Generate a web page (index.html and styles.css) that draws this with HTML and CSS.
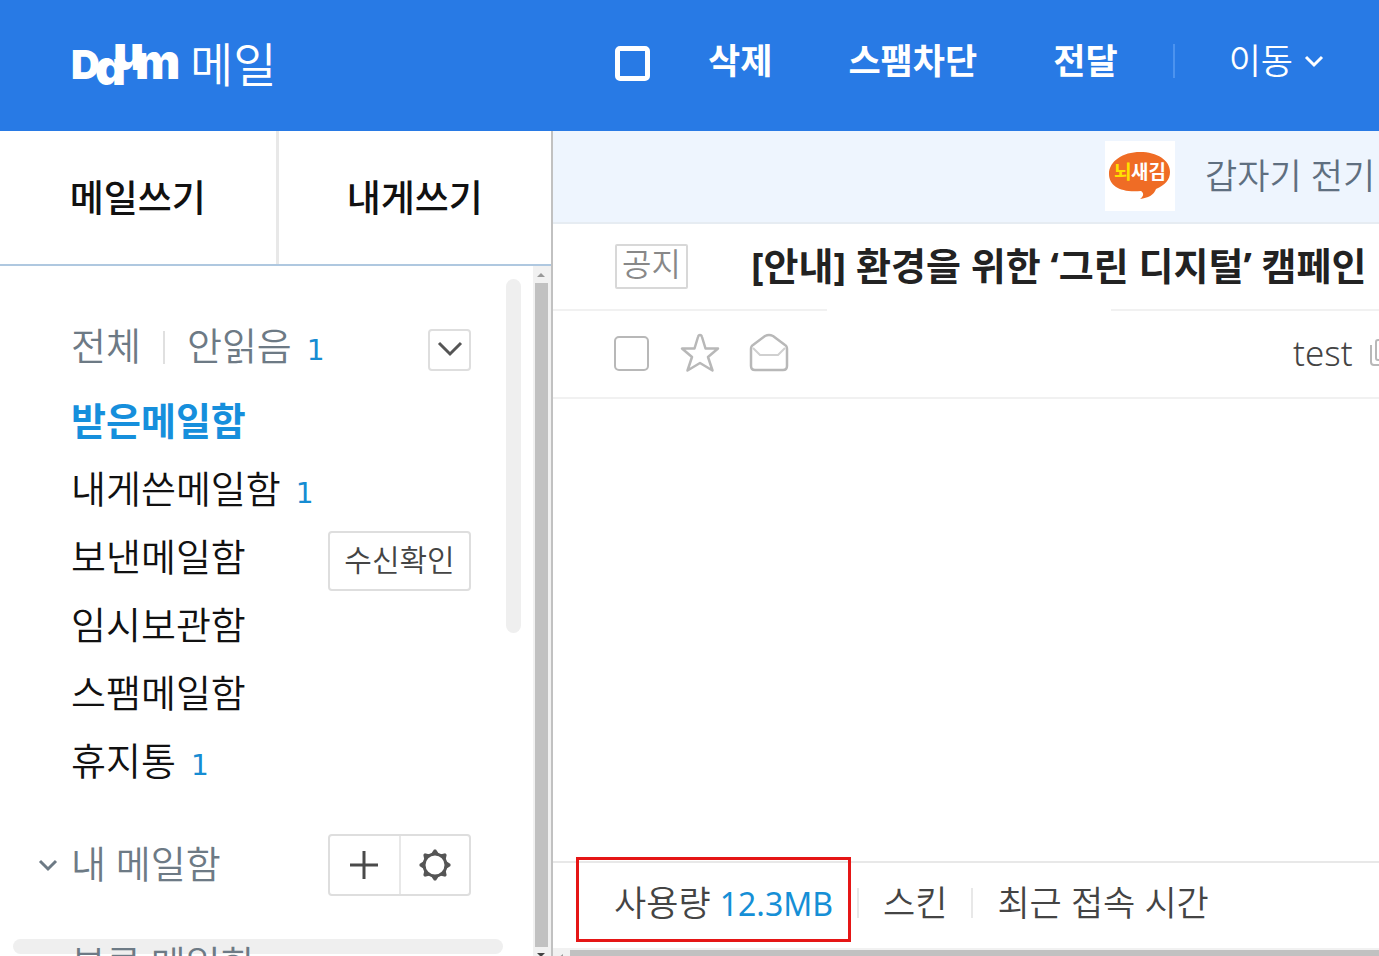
FILE: index.html
```html
<!DOCTYPE html>
<html lang="ko">
<head>
<meta charset="utf-8">
<meta name="viewport" content="width=device-width, initial-scale=1">
<title>Daum 메일</title>
<link rel="stylesheet" href="styles.css">
</head>
<body>
<div class="app">
  <header class="header">
    <a class="brand" href="#" aria-label="Daum 메일">
      <svg class="logo" width="108" height="48" viewBox="0 0 108 48" aria-hidden="true">
        <text class="logo-text" x="-1 23 41 63" y="37 43 28 37"><tspan class="logo-cap">D</tspan>aum</text>
      </svg>
      <span class="brand-name">메일</span>
    </a>
    <nav class="toolbar">
      <input class="check check-all" type="checkbox" aria-label="전체 선택">
      <button class="tool" type="button">삭제</button>
      <button class="tool" type="button">스팸차단</button>
      <button class="tool" type="button">전달</button>
      <span class="tool-divider"></span>
      <button class="tool tool-move" type="button">이동
        <svg width="20" height="14" viewBox="0 0 20 14" fill="none" stroke="#fff" stroke-width="3"><path d="M2 3l8 8 8-8"/></svg>
      </button>
    </nav>
  </header>

  <div class="body">
    <aside class="sidebar">
      <div class="write">
        <button class="write-btn" type="button">메일쓰기</button>
        <button class="write-btn" type="button">내게쓰기</button>
      </div>
      <div class="folders">
        <span class="thumb thumb-y"></span>
        <span class="thumb thumb-x"></span>
        <div class="scrollbar">
          <svg width="16" height="17" viewBox="0 0 16 17"><path d="M4 11l4-4 4 4z" fill="#999"/></svg>
          <span class="scroll-thumb"></span>
          <svg width="16" height="9" viewBox="0 0 16 9"><path d="M4 6h8l-4 4z" fill="#444"/></svg>
        </div>
        <div class="filter">
          <a href="#">전체</a>
          <span class="filter-divider"></span>
          <a href="#">안읽음<em class="count">1</em></a>
          <button class="box-btn more" type="button" aria-label="더보기">
            <svg width="26" height="16" viewBox="0 0 26 16" fill="none" stroke="#555" stroke-width="3"><path d="M2 2l11 11 11-11"/></svg>
          </button>
        </div>
        <ul class="list">
          <li class="row current"><a href="#">받은메일함</a></li>
          <li class="row"><a href="#">내게쓴메일함<em class="count">1</em></a></li>
          <li class="row"><a href="#">보낸메일함</a><button class="box-btn receipt" type="button">수신확인</button></li>
          <li class="row"><a href="#">임시보관함</a></li>
          <li class="row"><a href="#">스팸메일함</a></li>
          <li class="row"><a href="#">휴지통<em class="count">1</em></a></li>
        </ul>
        <div class="group">
          <svg class="caret" width="20" height="14" viewBox="0 0 20 14" fill="none" stroke="#6d7a85" stroke-width="3"><path d="M2 3l8 8 8-8"/></svg>
          <a href="#">내 메일함</a>
          <div class="pair">
            <button type="button" aria-label="메일함 추가">
              <svg width="28" height="28" viewBox="0 0 28 28" stroke="#4a4a4a" stroke-width="3"><path d="M14 0v28M0 14h28"/></svg>
            </button>
            <button type="button" aria-label="메일함 설정">
              <svg width="32" height="32" viewBox="0 0 32 32">
                <circle cx="16" cy="16" r="11" stroke="#555" stroke-width="3" fill="none"/>
                <g fill="#555">
                  <path id="tooth" d="M12 5l3-4.500h2l3 4.500z"/>
                  <use href="#tooth" transform="rotate(45 16 16)"/>
                  <use href="#tooth" transform="rotate(90 16 16)"/>
                  <use href="#tooth" transform="rotate(135 16 16)"/>
                  <use href="#tooth" transform="rotate(180 16 16)"/>
                  <use href="#tooth" transform="rotate(225 16 16)"/>
                  <use href="#tooth" transform="rotate(270 16 16)"/>
                  <use href="#tooth" transform="rotate(315 16 16)"/>
                </g>
              </svg>
            </button>
          </div>
        </div>
        <div class="group group-next"><a href="#">분류 메일함</a></div>
      </div>
    </aside>

    <main class="main">
      <a class="banner" href="#">
        <svg class="ad" width="70" height="70" viewBox="0 0 70 70" aria-hidden="true">
          <rect width="70" height="70" fill="#fff"/>
          <path d="M35 11C18 11 4 20 4 33c0 12 12 19 32 17 3 2 3 5-1 8 8-1 14-4 16-10 9-4 14-9 14-17 0-12-13-20-30-20z" fill="#ef6c25"/>
          <text class="ad-text ad-first" x="9" y="38">뇌</text>
          <text class="ad-text" x="26" y="38">새김</text>
        </svg>
        <span>갑자기 전기</span>
      </a>
      <div class="notice">
        <span class="tag">공지</span>
        <a class="notice-title" href="#">[안내] 환경을 위한 ‘그린 디지털’ 캠페인</a>
      </div>
      <div class="rule"><span class="rule-left"></span><span class="rule-right"></span></div>
      <div class="mail">
        <input class="check" type="checkbox" aria-label="메일 선택">
        <button class="icon-btn" type="button" aria-label="중요">
          <svg width="42" height="42" viewBox="0 0 42 42" fill="none" stroke="#b8b8b8" stroke-width="2.500" stroke-linejoin="round"><path d="M21 3q1.500 0 2 2l3.500 11.500H39l-10 8.500 4.500 13.500L21 31 8.500 38.500 13 25 3 16.500h12.500L19 5q.5-2 2-2z"/></svg>
        </button>
        <button class="icon-btn" type="button" aria-label="읽음">
          <svg width="42" height="42" viewBox="0 0 42 42" fill="none" stroke="#b8b8b8" stroke-width="2.500" stroke-linejoin="round"><path d="M3 17q0-3 2-4L17 4q4-2 8 0l12 9q2 1 2 4v17q0 4-4 4H7q-4 0-4-4z"/><path d="M5 16l7 7h18l7-7" stroke="#d0d0d0" stroke-width="2"/></svg>
        </button>
        <a class="sender" href="#">test</a>
        <svg class="copy" width="30" height="30" viewBox="0 0 30 30" fill="none" stroke="#b8b8b8" stroke-width="2"><rect x="7" y="2" width="18" height="20" rx="2"/><path d="M2 7v17q0 3 3 3h15"/></svg>
      </div>
      <footer class="footer">
        <a class="usage" href="#">사용량 <strong>12.3MB</strong><span class="mark"></span></a>
        <span class="foot-divider"></span>
        <a href="#">스킨</a>
        <span class="foot-divider"></span>
        <a href="#">최근 접속 시간</a>
      </footer>
      <div class="hscroll">
        <svg width="17" height="8" viewBox="0 0 17 8"><path d="M10 4v6L5 8z" fill="#999"/></svg>
        <span></span>
      </div>
    </main>
  </div>
</div>
</body>
</html>
```
FILE: styles.css
```css
* { box-sizing: border-box; }
body {
  margin: 0;
  background: #fff;
  color: #111;
  font-family: "Noto Sans", "Noto Sans CJK KR", sans-serif;
  font-weight: 350;
  font-size: 38px;
  line-height: 48px;
}
a { color: inherit; text-decoration: none; white-space: nowrap; }
button {
  margin: 0;
  padding: 0;
  border: 0;
  background: none;
  color: inherit;
  font: inherit;
  white-space: nowrap;
}
svg { display: block; flex: none; }
.app { display: flex; flex-direction: column; height: 100vh; overflow: hidden; }

.header { display: flex; flex: none; height: 131px; background: #287ae5; color: #fff; }
.brand { display: flex; flex: none; width: 615px; padding: 42px 0 0 72px; gap: 10px; }
.logo { overflow: visible; }
.logo-text { font-family: Inter, sans-serif; font-size: 48px; font-weight: 900; font-feature-settings: "cv11"; fill: #fff; }
.logo-cap { font-size: 40px; }
.brand-name { font-size: 47px; line-height: 44px; }
.toolbar { display: flex; flex: none; align-items: center; height: 122px; font-size: 35px; }
.tool { font-weight: 700; margin-right: 76px; }
.tool:nth-of-type(3) { margin-right: 55px; }
.tool-divider { width: 2px; height: 34px; margin-right: 54px; background: #4c93ef; }
.tool-move { display: flex; align-items: center; gap: 11px; margin: 0; font-weight: 350; }
.check {
  appearance: none;
  flex: none;
  width: 35px;
  height: 35px;
  margin: 0;
  border: 2px solid #b8b8b8;
  border-radius: 5px;
  background: #fff;
}
.check-all { margin: 4px 58px 0 0; border: 5px solid #fff; background: none; }

.body { display: flex; flex: 1; min-height: 0; }
.sidebar { display: flex; flex-direction: column; flex: none; width: 553px; border-right: 2px solid #c1c1c1; }
.write { display: grid; grid-template-columns: 1fr 1fr; flex: none; height: 135px; padding-bottom: 2px; border-bottom: 2px solid #afc8e0; }
.write { padding-bottom: 0; }
.write-btn { font-size: 37px; font-weight: 500; }
.write-btn + .write-btn { border-left: 3px solid #e8e8e8; }
.folders { position: relative; flex: 1; min-height: 0; padding: 46px 80px 0 71px; overflow: hidden; }
.folders a { padding-bottom: 4px; }
.thumb { position: absolute; z-index: -1; border-radius: 8px; background: #efefef; }
.thumb-y { top: 13px; right: 30px; width: 15px; height: 354px; }
.thumb-x { right: 48px; bottom: 2px; left: 13px; height: 15px; }
.scrollbar {
  position: absolute;
  top: 0;
  right: 0;
  bottom: 0;
  display: flex;
  flex-direction: column;
  width: 18px;
  background: #f1f1f1;
}
.scroll-thumb { flex: 1; margin: 0 3px 0 2px; background: #c1c1c1; }
.filter { display: flex; align-items: center; height: 76px; padding-bottom: 6px; color: #6d7a85; }
.filter-divider { width: 2px; height: 33px; margin: 0 22px; background: #e0e0e0; }
.count { margin-left: 15px; color: #168cd2; font-family: "DejaVu Sans", sans-serif; font-size: 28px; font-style: normal; font-weight: 400; line-height: 28px; }
.box-btn {
  display: flex;
  align-items: center;
  justify-content: center;
  margin: 5px 0 0 auto;
  padding-bottom: 2px;
  border: 2px solid #dedede;
  border-radius: 4px;
  background: #fff;
  color: #444;
}
.more { width: 43px; height: 42px; }
.list { margin: 0; padding: 0; list-style: none; }
.row { display: flex; align-items: center; height: 68px; }
.current { color: #168fdc; font-weight: 700; }
.receipt { width: 143px; height: 60px; font-size: 30px; }
.group { position: relative; display: flex; align-items: center; height: 62px; margin-top: 38px; color: #6d7a85; }
.caret { position: absolute; left: -33px; }
.pair { display: flex; width: 143px; height: 62px; margin-left: auto; border: 2px solid #dedede; border-radius: 4px; background: #fff; }
.pair button { display: flex; flex: 1; align-items: center; justify-content: center; }
.pair button + button { border-left: 2px solid #e8e8e8; }

.main { display: flex; flex: 1; flex-direction: column; min-width: 0; overflow: hidden; color: #444; }
.banner {
  display: flex;
  flex: none;
  align-items: center;
  gap: 30px;
  height: 93px;
  padding: 0 0 2px 552px;
  border-bottom: 2px solid #e6ecf2;
  background: #eef5fe;
  color: #5f6f80;
  font-size: 35px;
}
.ad-text { font-size: 19px; font-weight: 700; fill: #fff; }
.ad-first { fill: #ffe100; }
.notice { display: flex; flex: none; align-items: center; gap: 63px; height: 85px; padding-left: 62px; }
.tag { flex: none; width: 73px; height: 45px; border: 2px solid #d8d8d8; border-radius: 2px; color: #888; font-size: 32px; line-height: 36px; text-align: center; }
.notice-title { padding-bottom: 4px; color: #222; font-weight: 700; }
.rule { display: flex; flex: none; justify-content: space-between; height: 2px; }
.rule-left { width: 274px; background: #f1f1f1; }
.rule-right { width: 268px; background: #f1f1f1; }
.mail { display: flex; flex: none; align-items: center; height: 88px; padding: 0 0 2px 61px; border-bottom: 2px solid #f1f1f1; }
.icon-btn { margin-left: 30px; }
.icon-btn + .icon-btn { margin-left: 27px; }
.sender { margin-left: 503px; font-size: 35px; }
.copy { margin-left: 16px; }
.footer { display: flex; flex: none; align-items: center; height: 87px; margin-top: auto; padding: 0 0 5px 61px; border-top: 2px solid #e8e8e8; font-size: 35px; }
.usage { position: relative; }
.usage strong { color: #168fd6; font-weight: 400; font-size: 32px; }
.mark { position: absolute; top: -22px; right: -18px; bottom: -14px; left: -38px; border: 3px solid #e51616; }
.foot-divider { width: 2px; height: 30px; margin: 0 24px; background: #e8e8e8; }
.hscroll { display: flex; flex: none; height: 8px; padding-top: 2px; background: #f1f1f1; }
.hscroll span { flex: 1; background: #c1c1c1; }
```
